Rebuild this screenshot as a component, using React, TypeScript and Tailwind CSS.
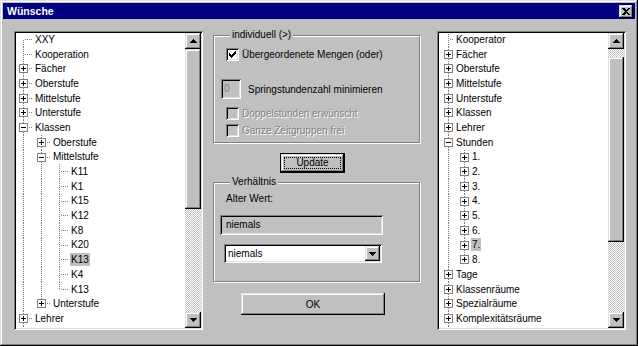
import React from "react";

type N = { l: string; t?: "+" | "-"; c?: N[]; s?: boolean };
type Row = { l: string; d: number; g: boolean[]; next: boolean; top: boolean; t?: "+" | "-"; s?: boolean };

const ROW = 14.7;

const raised = "shadow-[inset_-1px_-1px_#000,inset_1px_1px_#dfdfdf,inset_-2px_-2px_#808080,inset_2px_2px_#fff]";
const sunken = "shadow-[inset_1px_1px_#808080,inset_-1px_-1px_#fff,inset_2px_2px_#000,inset_-2px_-2px_#dfdfdf]";
const checker = "bg-[image:repeating-conic-gradient(#c0c0c0_0%_25%,#ffffff_0%_50%)] bg-[length:2px_2px]";
const grayText = "text-[#808080] [text-shadow:1px_1px_0_#fff]";

const leftTree: N[] = [
  { l: "XXY" },
  { l: "Kooperation" },
  { l: "Fächer", t: "+" },
  { l: "Oberstufe", t: "+" },
  { l: "Mittelstufe", t: "+" },
  { l: "Unterstufe", t: "+" },
  {
    l: "Klassen",
    t: "-",
    c: [
      { l: "Oberstufe", t: "+" },
      {
        l: "Mittelstufe",
        t: "-",
        c: [
          { l: "K11" },
          { l: "K1" },
          { l: "K15" },
          { l: "K12" },
          { l: "K8" },
          { l: "K20" },
          { l: "K13", s: true },
          { l: "K4" },
          { l: "K13" },
        ],
      },
      { l: "Unterstufe", t: "+" },
    ],
  },
  { l: "Lehrer", t: "+" },
  { l: "Stunden", t: "+" },
];

const rightTree: N[] = [
  { l: "Kooperator" },
  { l: "Fächer", t: "+" },
  { l: "Oberstufe", t: "+" },
  { l: "Mittelstufe", t: "+" },
  { l: "Unterstufe", t: "+" },
  { l: "Klassen", t: "+" },
  { l: "Lehrer", t: "+" },
  {
    l: "Stunden",
    t: "-",
    c: [
      { l: "1.", t: "+" },
      { l: "2.", t: "+" },
      { l: "3.", t: "+" },
      { l: "4.", t: "+" },
      { l: "5.", t: "+" },
      { l: "6.", t: "+" },
      { l: "7.", t: "+", s: true },
      { l: "8.", t: "+" },
    ],
  },
  { l: "Tage", t: "+" },
  { l: "Klassenräume", t: "+" },
  { l: "Spezialräume", t: "+" },
  { l: "Komplexitätsräume", t: "+" },
  { l: "Lehrerarbeitsräume", t: "+" },
];

// the lists go on below the visible part, so the root line keeps running
function flatten(nodes: N[], d: number, g: boolean[], out: Row[], scrolled: boolean) {
  nodes.forEach((n, i) => {
    const next = i < nodes.length - 1 || d === 0;
    const top = !(d === 0 && i === 0 && !scrolled);
    out.push({ l: n.l, d, g, next, top, t: n.t, s: n.s });
    if (n.c) flatten(n.c, d + 1, [...g, next], out, scrolled);
  });
  return out;
}

function TreeRow({ r, colW, lineX }: { r: Row; colW: number; lineX: number }) {
  const m = 7.5;
  const lx = lineX + 0.5;
  const dot = { stroke: "#808080", strokeDasharray: "1 1" };
  const cols = [];
  for (let k = 0; k <= r.d; k++) {
    const own = k === r.d;
    cols.push(
      <svg key={k} width={colW} height={ROW} className="shrink-0" shapeRendering="crispEdges">
        {!own && r.g[k] && <line x1={lx} y1={0} x2={lx} y2={ROW} {...dot} />}
        {own && r.top && <line x1={lx} y1={0} x2={lx} y2={m} {...dot} />}
        {own && r.next && <line x1={lx} y1={m} x2={lx} y2={ROW} {...dot} />}
        {own && <line x1={lx + 1} y1={m} x2={colW - 1} y2={m} {...dot} />}
        {own && r.t && (
          <g>
            <rect x={lineX - 3.5} y={3.5} width={8} height={8} fill="#fff" stroke="#808080" />
            <line x1={lineX - 2} y1={m} x2={lineX + 3} y2={m} stroke="#000" />
            {r.t === "+" && <line x1={lx} y1={5} x2={lx} y2={10} stroke="#000" />}
          </g>
        )}
      </svg>
    );
  }
  return (
    <div className="flex items-center h-[14.7px]">
      {cols}
      <span className={"px-[1px] leading-[13px] whitespace-nowrap " + (r.s ? "bg-[#c0c0c0]" : "")}>{r.l}</span>
    </div>
  );
}

function Arrow({ up }: { up?: boolean }) {
  return (
    <div className={`w-[16px] h-[16px] bg-[#c0c0c0] ${raised} flex items-center justify-center shrink-0`}>
      <svg width="7" height="4" shapeRendering="crispEdges">
        <path d={up ? "M3.5 0 L7 4 L0 4 Z" : "M0 0 L7 0 L3.5 4 Z"} fill="#000" />
      </svg>
    </div>
  );
}

function ScrollBar({ pre, thumb }: { pre: string; thumb: string }) {
  return (
    <div className="w-[16px] flex flex-col shrink-0">
      <Arrow up />
      <div className={`flex-1 flex flex-col ${checker}`}>
        <div className={pre} />
        <div className={`${thumb} bg-[#c0c0c0] ${raised}`} />
      </div>
      <Arrow />
    </div>
  );
}

function Tree({ data, scrolled, colW, lineX, pre, thumb }: { data: N[]; scrolled: boolean; colW: number; lineX: number; pre: string; thumb: string }) {
  const rows = flatten(data, 0, [], [], scrolled);
  return (
    <div className={`w-[189px] h-[299px] p-[2px] flex shrink-0 ${sunken}`}>
      <div className="flex-1 bg-white overflow-hidden">
        <div className="mt-[-1px]">
          {rows.map((r, i) => (
            <TreeRow key={i} r={r} colW={colW} lineX={lineX} />
          ))}
        </div>
      </div>
      <ScrollBar pre={pre} thumb={thumb} />
    </div>
  );
}

function Check({ on, off }: { on?: boolean; off?: boolean }) {
  return (
    <div className={`w-[13px] h-[13px] shrink-0 flex items-center justify-center ${sunken} ${off ? "bg-[#c0c0c0]" : "bg-white"}`}>
      {on && (
        <svg width="7" height="7" shapeRendering="crispEdges">
          <path d="M0 2 L2 4 L7 -1 L7 2 L2 7 L0 5 Z" fill="#000" />
        </svg>
      )}
    </div>
  );
}

export default function App() {
  return (
    <div className="w-[638px] h-[346px] bg-[#c0c0c0] p-[3px] flex flex-col font-['Liberation_Sans',Arial,sans-serif] text-[10px] text-black shadow-[inset_-1px_-1px_#000,inset_1px_1px_#dfdfdf,inset_-2px_-2px_#808080,inset_2px_2px_#fff]">
      {/* Title bar */}
      <div className="h-[16px] bg-[#000080] flex items-center pl-[4px] pr-[2px] shrink-0">
        <span className="font-bold text-white text-[10.5px] leading-none">Wünsche</span>
        <div className={`ml-auto w-[14px] h-[13px] bg-[#c0c0c0] ${raised} flex items-center justify-center`}>
          <svg width="8" height="7" shapeRendering="crispEdges">
            <path d="M0 0 L2 0 L4 2 L6 0 L8 0 L5 3.5 L8 7 L6 7 L4 5 L2 7 L0 7 L3 3.5 Z" fill="#000" />
          </svg>
        </div>
      </div>

      <div className="flex items-start pl-[11px] pt-[10px]">
        <div className="mt-[2px]">
          <Tree data={leftTree} scrolled={false} colW={18} lineX={7} pre="h-0" thumb="h-[160px]" />
        </div>

        {/* Middle column */}
        <div className="ml-[10px] w-[207px] flex flex-col">
          <fieldset className="h-[114px] border border-[#808080] shadow-[inset_1px_1px_#fff,1px_1px_#fff] px-[12px]">
            <legend className="ml-[4px] px-[2px] bg-[#c0c0c0] leading-[12px]">individuell (&gt;)</legend>
            <div className="flex items-center gap-[3px] mt-[6px]">
              <Check on />
              <span>Übergeordenete Mengen (oder)</span>
            </div>
            <div className="flex items-center ml-[-5px] mt-[17px]">
              <div className={`w-[20px] h-[20px] ${sunken} bg-[#c0c0c0] pl-[3px] leading-[20px] text-[#808080]`}>0</div>
              <span className="ml-[7px]">Springstundenzahl minimieren</span>
            </div>
            <div className="flex items-center gap-[3px] mt-[7px]">
              <Check off />
              <span className={grayText}>Doppelstunden erwünscht</span>
            </div>
            <div className="flex items-center gap-[3px] mt-[2px]">
              <Check off />
              <span className={grayText}>Ganze Zeitgruppen frei</span>
            </div>
          </fieldset>

          <div className="ml-[67px] mt-[10px] w-[65px] h-[20px] border border-black">
            <div className={`w-full h-full bg-[#c0c0c0] ${raised} p-[3px]`}>
              <div className="w-full h-full border border-dotted border-black flex items-center justify-center leading-none">Update</div>
            </div>
          </div>

          <fieldset className="mt-[3px] h-[106px] border border-[#808080] shadow-[inset_1px_1px_#fff,1px_1px_#fff] px-[12px]">
            <legend className="ml-[4px] px-[2px] bg-[#c0c0c0] leading-[12px]">Verhältnis</legend>
            <div className="mt-[5px] leading-[12px]">Alter Wert:</div>
            <div className={`ml-[-6px] mt-[10px] w-[163px] h-[20px] ${sunken} bg-[#c0c0c0] pl-[6px] leading-[20px]`}>niemals</div>
            <div className={`ml-[-2px] mt-[9px] w-[158px] h-[19px] ${sunken} bg-white p-[2px] flex`}>
              <div className="flex-1 pl-[2px] leading-[15px]">niemals</div>
              <div className={`w-[15px] h-[15px] bg-[#c0c0c0] ${raised} flex items-center justify-center`}>
                <svg width="7" height="4" shapeRendering="crispEdges">
                  <path d="M0 0 L7 0 L3.5 4 Z" fill="#000" />
                </svg>
              </div>
            </div>
          </fieldset>

          <div className={`ml-[28px] mt-[11px] w-[144px] h-[22px] bg-[#c0c0c0] ${raised} flex items-center justify-center`}>OK</div>
        </div>

        <div className="ml-[17px] mt-[2px]">
          <Tree data={rightTree} scrolled colW={16} lineX={9} pre="h-[8px]" thumb="h-[185px]" />
        </div>
      </div>
    </div>
  );
}
